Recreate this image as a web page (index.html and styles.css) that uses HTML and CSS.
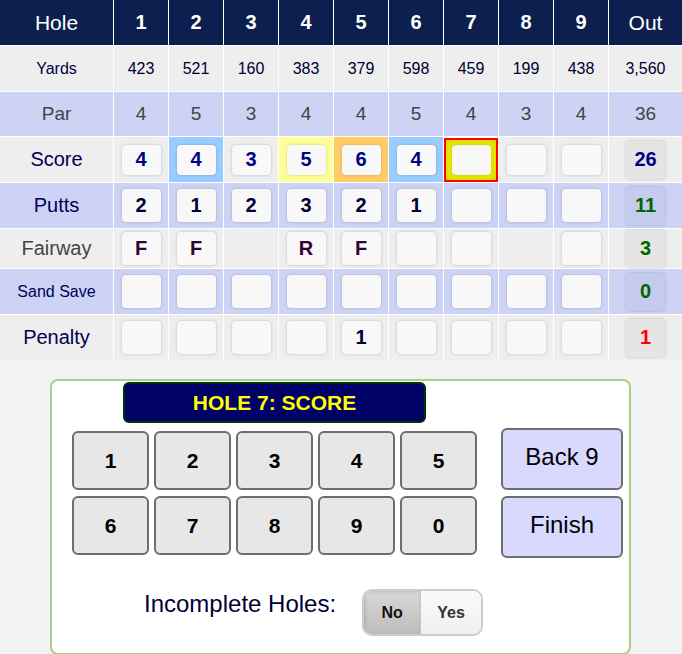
FILE: index.html
```html
<!DOCTYPE html>
<html lang="en">
<head>
  <meta charset="UTF-8" />
  <title>Scorecard - Front 9</title>
  <link rel="stylesheet" href="styles.css">
</head>
<body>

  <div class="card">
    <!-- header -->
    <div class="cell head lbl">Hole</div>
    <div class="cell head">1</div>
    <div class="cell head">2</div>
    <div class="cell head">3</div>
    <div class="cell head">4</div>
    <div class="cell head">5</div>
    <div class="cell head">6</div>
    <div class="cell head">7</div>
    <div class="cell head">8</div>
    <div class="cell head">9</div>
    <div class="cell head lbl">Out</div>

    <!-- yards -->
    <div class="cell grey yards-lbl">Yards</div>
    <div class="cell grey yards">423</div>
    <div class="cell grey yards">521</div>
    <div class="cell grey yards">160</div>
    <div class="cell grey yards">383</div>
    <div class="cell grey yards">379</div>
    <div class="cell grey yards">598</div>
    <div class="cell grey yards">459</div>
    <div class="cell grey yards">199</div>
    <div class="cell grey yards">438</div>
    <div class="cell grey yards">3,560</div>

    <!-- par -->
    <div class="cell blue par">Par</div>
    <div class="cell blue par">4</div>
    <div class="cell blue par">5</div>
    <div class="cell blue par">3</div>
    <div class="cell blue par">4</div>
    <div class="cell blue par">4</div>
    <div class="cell blue par">5</div>
    <div class="cell blue par">4</div>
    <div class="cell blue par">3</div>
    <div class="cell blue par">4</div>
    <div class="cell blue par">36</div>

    <!-- score -->
    <div class="cell grey row-lbl">Score</div>
    <div class="cell grey"><span class="box short score">4</span></div>
    <div class="cell birdie"><span class="box short score">4</span></div>
    <div class="cell grey"><span class="box short score">3</span></div>
    <div class="cell bogey"><span class="box short score">5</span></div>
    <div class="cell double"><span class="box short score">6</span></div>
    <div class="cell birdie"><span class="box short score">4</span></div>
    <div class="cell current"><span class="box short score"></span></div>
    <div class="cell grey"><span class="box short score"></span></div>
    <div class="cell grey"><span class="box short score"></span></div>
    <div class="cell grey"><span class="total navy">26</span></div>

    <!-- putts -->
    <div class="cell blue row-lbl">Putts</div>
    <div class="cell blue"><span class="box">2</span></div>
    <div class="cell blue"><span class="box">1</span></div>
    <div class="cell blue"><span class="box">2</span></div>
    <div class="cell blue"><span class="box">3</span></div>
    <div class="cell blue"><span class="box">2</span></div>
    <div class="cell blue"><span class="box">1</span></div>
    <div class="cell blue"><span class="box"></span></div>
    <div class="cell blue"><span class="box"></span></div>
    <div class="cell blue"><span class="box"></span></div>
    <div class="cell blue"><span class="total green">11</span></div>

    <!-- fairway -->
    <div class="cell grey row-lbl dim">Fairway</div>
    <div class="cell grey"><span class="box fw">F</span></div>
    <div class="cell grey"><span class="box fw">F</span></div>
    <div class="cell grey"></div>
    <div class="cell grey"><span class="box fw">R</span></div>
    <div class="cell grey"><span class="box fw">F</span></div>
    <div class="cell grey"><span class="box"></span></div>
    <div class="cell grey"><span class="box"></span></div>
    <div class="cell grey"></div>
    <div class="cell grey"><span class="box"></span></div>
    <div class="cell grey"><span class="total green">3</span></div>

    <!-- sand save -->
    <div class="cell blue row-lbl small">Sand Save</div>
    <div class="cell blue"><span class="box"></span></div>
    <div class="cell blue"><span class="box"></span></div>
    <div class="cell blue"><span class="box"></span></div>
    <div class="cell blue"><span class="box"></span></div>
    <div class="cell blue"><span class="box"></span></div>
    <div class="cell blue"><span class="box"></span></div>
    <div class="cell blue"><span class="box"></span></div>
    <div class="cell blue"><span class="box"></span></div>
    <div class="cell blue"><span class="box"></span></div>
    <div class="cell blue"><span class="total green">0</span></div>

    <!-- penalty -->
    <div class="cell grey row-lbl">Penalty</div>
    <div class="cell grey"><span class="box"></span></div>
    <div class="cell grey"><span class="box"></span></div>
    <div class="cell grey"><span class="box"></span></div>
    <div class="cell grey"><span class="box"></span></div>
    <div class="cell grey"><span class="box">1</span></div>
    <div class="cell grey"><span class="box"></span></div>
    <div class="cell grey"><span class="box"></span></div>
    <div class="cell grey"><span class="box"></span></div>
    <div class="cell grey"><span class="box"></span></div>
    <div class="cell grey"><span class="total red">1</span></div>
  </div>

  <div class="panel">
    <div class="panel-top">
      <div class="pad-col">
        <div class="title">HOLE 7: SCORE</div>
        <div class="keypad">
          <button class="key">1</button>
          <button class="key">2</button>
          <button class="key">3</button>
          <button class="key">4</button>
          <button class="key">5</button>
          <button class="key">6</button>
          <button class="key">7</button>
          <button class="key">8</button>
          <button class="key">9</button>
          <button class="key">0</button>
        </div>
      </div>
      <div class="side-col">
        <button class="nav">Back 9</button>
        <button class="nav">Finish</button>
      </div>
    </div>

    <div class="incomplete">
      <span class="inc-lbl">Incomplete Holes:</span>
      <div class="toggle">
        <span class="opt on">No</span>
        <span class="opt">Yes</span>
      </div>
    </div>
  </div>

</body>
</html>
```

FILE: styles.css
```css
body
{
  margin: 0;
  padding: 0;
  font-family: "Liberation Sans", Arial, sans-serif;
  background: #f2f2f2;
}

/* scorecard grid */
.card
{
  display: grid;
  grid-template-columns: 113px repeat(9, 54px) 73px;
  grid-template-rows: 45px 45px 44px 45px 45px 39px 45px 45px;
  gap: 1px;
  background: #ffffff;
  width: 682px;
}

.cell
{
  display: flex;
  justify-content: center;
  align-items: center;
}

.head
{
  background: #0c1f4e;
  color: #ffffff;
  font-size: 20px;
  font-weight: bold;
}

.head.lbl
{
  font-size: 21px;
  font-weight: normal;
}

.grey
{
  background: #eeeeee;
}

.blue
{
  background: #ccd3f5;
}

.birdie
{
  background: #99ccff;
}

.bogey
{
  background: #ffff99;
}

.double
{
  background: #ffcc66;
}

.current
{
  background: #f2f200;
  border: 2px solid #ff0000;
  box-shadow: inset 0 0 8px rgba(120, 120, 0, 0.35);
  margin-top: 1px;
}

.yards-lbl
{
  font-size: 16px;
  color: #000044;
}

.yards
{
  font-size: 16px;
  color: #000033;
}

.par
{
  font-size: 19px;
  color: #444444;
}

.row-lbl
{
  font-size: 20px;
  color: #000055;
}

.row-lbl.dim
{
  color: #444444;
}

.row-lbl.small
{
  font-size: 16px;
}

/* entry boxes */
.box
{
  width: 39px;
  height: 33px;
  display: flex;
  justify-content: center;
  align-items: center;
  background: #f8f8f8;
  border-radius: 4px;
  box-shadow: 0 0 3px rgba(0, 0, 0, 0.22);
  font-size: 20px;
  font-weight: bold;
  color: #000033;
}

.box.short
{
  height: 30px;
}

.score
{
  color: #000088;
}

.fw
{
  color: #330033;
}

.total
{
  width: 39px;
  height: 38px;
  display: flex;
  justify-content: center;
  align-items: center;
  background: rgba(0, 0, 0, 0.035);
  border-radius: 4px;
  box-shadow: 0 0 3px rgba(0, 0, 0, 0.2);
  font-size: 20px;
  font-weight: bold;
}

.navy
{
  color: #000088;
}

.green
{
  color: #006600;
}

.red
{
  color: #ff0000;
}

/* entry panel */
.panel
{
  margin: 19px 0 0 50px;
  width: 577px;
  background: #ffffff;
  border: 2px solid #a8d08c;
  border-radius: 8px;
  padding: 1px 0 17px 0;
}

.panel-top
{
  display: flex;
  padding-left: 20px;
}

.title
{
  width: 299px;
  height: 37px;
  margin: 0 auto;
  background: #000066;
  border: 2px solid #003300;
  border-radius: 6px;
  color: #ffff00;
  font-size: 21px;
  font-weight: bold;
  display: flex;
  justify-content: center;
  align-items: center;
}

.keypad
{
  display: grid;
  grid-template-columns: repeat(5, 77px);
  grid-auto-rows: 59px;
  gap: 6px 5px;
  margin-top: 8px;
}

.key, .nav
{
  font-family: "Liberation Sans", Arial, sans-serif;
  border: 2px solid #6e6e6e;
  border-radius: 6px;
  color: #000000;
  padding: 0;
  cursor: pointer;
}

.key
{
  background: #e7e7e7;
  font-size: 21px;
  font-weight: bold;
}

.side-col
{
  display: flex;
  flex-direction: column;
  gap: 6px;
  margin: 46px 0 0 24px;
}

.nav
{
  width: 122px;
  height: 62px;
  background: #d9d9ff;
  font-size: 24px;
  padding-bottom: 4px;
}

.incomplete
{
  display: flex;
  align-items: center;
  margin: 31px 0 0 92px;
}

.inc-lbl
{
  font-size: 24px;
  color: #000033;
  margin: 0 26px 18px 0;
}

.toggle
{
  display: flex;
  height: 43px;
  border: 2px solid #cccccc;
  border-radius: 10px;
  overflow: hidden;
}

.opt
{
  display: flex;
  justify-content: center;
  align-items: center;
  width: 60px;
  font-size: 16px;
  font-weight: bold;
  color: #333333;
  background: linear-gradient(#fafafa, #f0f0f0);
}

.opt.on
{
  width: 56px;
  color: #111111;
  background: linear-gradient(#d8d8d8, #bcbcbc);
  box-shadow: inset 1px 1px 3px rgba(0, 0, 0, 0.15);
  border-right: 1px solid #c4c4c4;
}
```
